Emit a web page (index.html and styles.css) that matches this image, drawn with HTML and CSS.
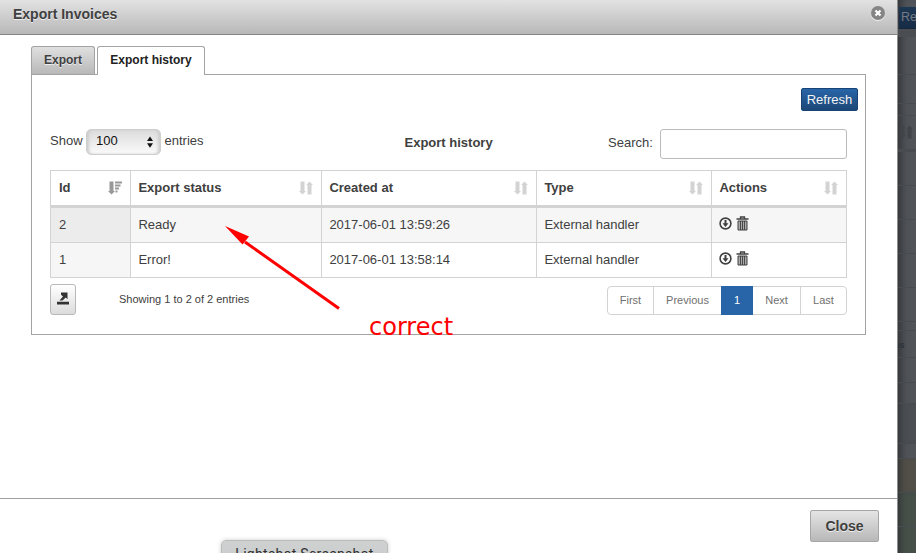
FILE: index.html
```html
<!DOCTYPE html>
<html lang="en">
<head>
<meta charset="utf-8">
<title>Export Invoices</title>
<link rel="stylesheet" href="styles.css">
</head>
<body>
<svg class="sprite" aria-hidden="true">
  <symbol id="sort" viewBox="0 0 14 14"><path d="M1.500 .5h4V10H7L3.500 13.500 0 10h1.500zM8.500 13.500V4H7l3.500-3.500L14 4h-1.500v9.500z"/></symbol>
  <symbol id="sort-desc" viewBox="0 0 14 14"><path d="M1.500 .5h4V10H7L3.500 13.500 0 10h1.500zM7 .5h7v2H7zM7 3.500h5.500v2H7zM7 6.500h4v2H7zM7.500 9.500h2v2h-2z"/></symbol>
  <symbol id="download" viewBox="0 0 13 13"><circle cx="6.500" cy="6.500" r="5.400" fill="none" stroke="currentColor" stroke-width="1.600"/><path d="M5.500 3h2v3.300h2L6.500 10 3.500 6.300h2z"/></symbol>
  <symbol id="trash" viewBox="0 0 13 15"><path d="M4.500 2.500V1h4v1.500M.5 3h12" fill="none" stroke="currentColor" stroke-width="1.300"/><path d="M2 5h9v9H2z" fill="#aaa" stroke="currentColor"/><path d="M4.500 5v9M6.500 5v9M8.500 5v9" stroke="currentColor" stroke-width=".9"/></symbol>
</svg>
<div class="screen">
  <section class="dialog">
    <header class="dialog-head">
      <h1>Export Invoices</h1>
      <svg class="close-icon" viewBox="0 0 16 16"><circle cx="8" cy="8.800" r="7.200" fill="#eee"/><circle cx="8" cy="8" r="7" fill="#858585"/><path d="M5.500 5.500l5 5m0-5l-5 5" stroke="#fff" stroke-width="2.200"/></svg>
    </header>
    <main class="dialog-body">
      <nav class="tabs"><a class="tab">Export</a><a class="tab active">Export history</a></nav>
      <div class="panel">
        <div class="actions"><button class="refresh">Refresh</button></div>
        <div class="toolbar">
          <div class="length">Show <span class="select">100<svg viewBox="0 0 6 12"><path d="M0 5L3 .5 6 5zM0 7.200h6L3 11.700z"/></svg></span> entries</div>
          <strong class="caption">Export history</strong>
          <label class="search"><span>Search:</span> <input type="text"></label>
        </div>
        <table>
          <colgroup><col class="c-id"><col class="c-status"><col class="c-date"><col class="c-type"><col class="c-act"></colgroup>
          <thead><tr>
            <th><div class="th">Id<svg class="sorted"><use href="#sort-desc"/></svg></div></th>
            <th><div class="th">Export status<svg><use href="#sort"/></svg></div></th>
            <th><div class="th">Created at<svg><use href="#sort"/></svg></div></th>
            <th><div class="th">Type<svg><use href="#sort"/></svg></div></th>
            <th><div class="th">Actions<svg><use href="#sort"/></svg></div></th>
          </tr></thead>
          <tbody>
            <tr class="odd"><td>2</td><td>Ready</td><td>2017-06-01 13:59:26</td><td>External handler</td><td><div class="icons"><svg class="dl"><use href="#download"/></svg><svg class="bin"><use href="#trash"/></svg></div></td></tr>
            <tr><td>1</td><td>Error!</td><td>2017-06-01 13:58:14</td><td>External handler</td><td><div class="icons"><svg class="dl"><use href="#download"/></svg><svg class="bin"><use href="#trash"/></svg></div></td></tr>
          </tbody>
        </table>
        <div class="table-foot">
          <button class="export"><svg viewBox="0 0 12 13"><path d="M0 9.800h12v2.700H0zM4 .5h6.500v6.700L8.800 5.500 5.500 8.500H2.500L6 4.500 4 2.700z"/></svg></button>
          <span class="info">Showing 1 to 2 of 2 entries</span>
          <div class="pager"><a class="p-first">First</a><a class="p-prev">Previous</a><a class="p-num">1</a><a class="p-next">Next</a><a class="p-last">Last</a></div>
        </div>
      </div>
    </main>
    <footer class="dialog-foot"><button class="close">Close</button></footer>
  </section>
  <aside class="backdrop">
    <div class="b-top"></div><div class="b-btn">Re</div><div class="b-band"></div>
    <div class="b-29"></div><div class="b-12"></div>
    <div class="b-sort"><svg><use href="#sort"/></svg></div>
    <div class="b-34"></div><div class="b-34"></div><div class="b-34"></div><div class="b-34"></div><div class="b-34"></div>
    <div class="b-9"></div><div class="b-text">ns</div><div class="b-25"></div><div class="b-21"></div><div class="b-40"></div>
    <div class="b-light"></div><div class="b-brown"></div><div class="b-green"></div><div class="b-green"></div>
  </aside>
</div>
<svg class="arrow" viewBox="0 0 120 90"><path d="M20 17L114 83.500" stroke="#f00" stroke-width="3"/><path d="M0 1L24 11.500 17.500 19.500z" fill="#f00"/></svg>
<div class="note">correct</div>
<div class="tooltip">Lightshot Screenshot</div>
</body>
</html>
```
FILE: styles.css
```css
* { box-sizing: border-box; }
body { margin: 0; width: 916px; height: 553px; overflow: hidden; position: relative; background: #fff; color: #404040; font: 13px/18px "Liberation Sans", Arial, sans-serif; }
button { margin: 0; padding: 0; font-family: inherit; }
svg { fill: currentColor; display: block; flex: none; }
.sprite { display: none; }
.screen { display: flex; height: 553px; }
.dialog { width: 898px; border-right: 1px solid #8c8e8d; display: flex; flex-direction: column; }
.dialog-head { height: 35px; display: flex; justify-content: space-between; padding: 5px 11px 0 13px; background: linear-gradient(#e2e2e2, #b8b8b8); border-bottom: 1px solid #858585; }
h1 { margin: 0; font-size: 14px; line-height: 18px; text-shadow: 0 1px #eee; }
.close-icon { width: 16px; height: 16px; }
.dialog-body { height: 463px; padding: 11px 31px 0; }
.tabs { display: flex; gap: 2px; height: 29px; margin-bottom: -1px; }
.tab { width: 64px; height: 28px; text-align: center; font-weight: bold; font-size: 12px; line-height: 27px; border: 1px solid #a3a3a3; border-bottom: 0; border-radius: 3px 3px 0 0; background: linear-gradient(#e0e0e0, #b8b8b8); text-shadow: 0 1px #eee; }
.tab.active { position: relative; width: 108px; height: 29px; background: #fff; color: #222; text-shadow: none; }
.panel { width: 835px; height: 261px; border: 1px solid #a3a3a3; padding: 13px 7px 0 18px; }
.actions { display: flex; justify-content: flex-end; }
.refresh { width: 57px; height: 23px; border: 1px solid #174475; border-radius: 2px; background: linear-gradient(#2865a8, #1d4777); color: #f4f4f4; font-size: 13px; line-height: 20px; }
.toolbar { display: flex; align-items: center; width: 797px; height: 30px; margin: 18px 0 11px; }
.length { display: flex; align-items: center; width: 354.500px; gap: 3.500px; padding-bottom: 7px; }
.select { display: flex; align-items: center; justify-content: space-between; width: 75px; height: 26px; margin-top: 2px; padding: 0 7px 2px 9px; color: #111; border: 1px solid #cfcfcf; border-radius: 5px; background: linear-gradient(#dcdcdc, #fafafa); box-shadow: inset 3px 0 3px -1px #ccc, inset -3px 0 3px -1px #ccc; }
.select svg { width: 6px; height: 12px; margin-top: 3px; }
.caption { width: 203.500px; padding-bottom: 3px; }
.search { display: flex; align-items: center; gap: 7px; }
.search span { padding-bottom: 2px; }
.search input { width: 187px; height: 30px; border: 1px solid #bbb; border-radius: 3px; margin: 0; }
table { width: 797px; table-layout: fixed; border-collapse: separate; border-spacing: 0; border: solid #d3d3d3; border-width: 1px 0 0 1px; }
.c-id { width: 80px; } .c-status { width: 191px; } .c-date { width: 215px; } .c-type { width: 175px; } .c-act { width: 135px; }
th, td { padding: 0 8px 0 7.400px; text-align: left; border: solid #d3d3d3; border-width: 0 1px 1px 0; height: 35px; }
th:first-child, td:first-child { padding-left: 8px; }
th { height: 37px; border-bottom-width: 3px; }
.th { display: flex; align-items: center; justify-content: space-between; }
.th svg { width: 14px; height: 14px; color: #d3d3d3; margin-top: -1px; }
.th .sorted { color: #999; }
.odd td { background: #f6f6f6; }
td:first-child { background: #f6f6f6; }
.odd td:first-child { background: #ececec; }
.icons { display: flex; align-items: center; gap: 4px; margin-top: -4px; }
.dl { width: 13px; height: 13px; } .bin { width: 13px; height: 15px; }
.table-foot { display: flex; width: 797px; padding-top: 6px; }
.export { width: 26px; height: 31px; display: flex; justify-content: center; align-items: center; padding-bottom: 3px; color: #333; border: 1px solid #b8b8b8; border-radius: 3px; background: linear-gradient(#fff, #dcdcdc); }
.export svg { width: 12px; height: 13px; }
.info { width: 488px; padding-left: 43px; font-size: 11px; line-height: 30px; }
.pager { display: flex; width: 240px; height: 29px; margin: 2px 0 0 43px; border: 1px solid #d3d3d3; border-radius: 4px; font-size: 11px; line-height: 26px; text-align: center; color: #707070; }
.pager a + a { border-left: 1px solid #d3d3d3; }
.p-first { width: 45px; } .p-prev { width: 68px; } .p-next { width: 47px; } .p-last { width: 46px; }
.pager .p-num { width: 32px; margin: -1px 0; padding-top: 1px; color: #fff; background: #2865a8; border: 0; }
.pager .p-next { border: 0; }
.dialog-foot { height: 55px; border-top: 1px solid #a0a0a0; display: flex; justify-content: flex-end; padding: 11px 18px 0; }
.close { width: 69px; height: 32px; border: 1px solid #a6a6a6; border-radius: 2px; background: linear-gradient(#e5e5e5, #b8b8b8); color: #404040; font-size: 14px; font-weight: bold; text-shadow: 0 1px #eee; }
.backdrop { width: 18px; overflow: hidden; background: #515459; box-shadow: inset 10px 0 9px -7px #303235; }
.backdrop div { border-bottom: 1px solid #484b4f; }
.backdrop .b-top { height: 7px; border: 0; }
.backdrop .b-btn { height: 22px; margin-left: 1px; padding-left: 2px; background: linear-gradient(#1d3753, #172c46); color: #747b82; font-size: 12.500px; line-height: 21px; border-color: #16273d; }
.b-band { height: 46px; background: linear-gradient(#4a4d51 8px, transparent 8px); }
.b-29 { height: 29px; } .b-12 { height: 12px; }
.backdrop .b-sort { height: 36px; padding: 9px 0 0 1px; border-bottom-width: 3px; color: #414448; }
.b-sort svg { width: 14px; height: 14px; }
.b-34 { height: 34px; } .b-9 { height: 9px; } .b-text { height: 27px; margin-left: -5px; font-size: 9px; font-weight: bold; line-height: 28px; color: #2b3139; } .b-25 { height: 25px; } .b-21 { height: 21px; }
.backdrop .b-text { margin-left: 0; text-indent: -4px; }
.b-40 { height: 40px; background: #4b4e53; box-shadow: inset 8px 0 7px -6px #303235; }
.b-light { height: 15px; }
.b-brown { height: 34px; background: #514f48; box-shadow: inset 8px 0 7px -6px #303235; }
.b-green { height: 34px; background: #465049; box-shadow: inset 8px 0 7px -6px #303235; }
.arrow { position: absolute; left: 225px; top: 225px; width: 120px; height: 90px; }
.note { position: absolute; left: 369px; top: 313px; font: 24px/28px "DejaVu Sans", sans-serif; color: #f00; letter-spacing: 0; }
.tooltip { position: absolute; left: 221px; top: 540px; width: 167px; height: 28px; border: 1px solid #bbb; border-radius: 5px; background: linear-gradient(#cfd1d1, #c9cccc); box-shadow: 0 0 4px #ccc; text-align: center; font: 14px/26px Roboto, sans-serif; letter-spacing: .3px; color: #303030; }
```
